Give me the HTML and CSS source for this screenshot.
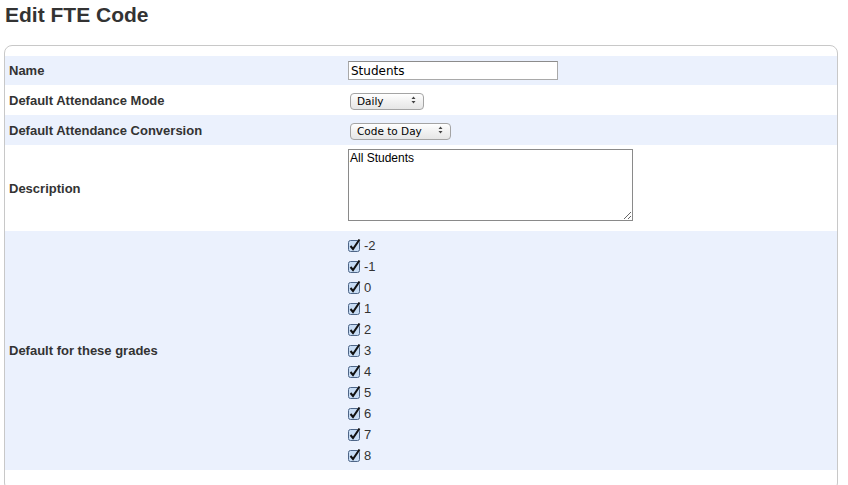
FILE: index.html
```html
<!DOCTYPE html>
<html>
<head>
<meta charset="utf-8">
<title>Edit FTE Code</title>
<link rel="stylesheet" href="styles.css">
</head>
<body>
<h1 class="title">Edit FTE Code</h1>
<div class="box">
  <div class="row alt first">
    <div class="label">Name</div>
    <div class="value"><input class="text" type="text" value="Students"></div>
  </div>
  <div class="row">
    <div class="label">Default Attendance Mode</div>
    <div class="value">
      <span class="select w-mode"><select><option>Daily</option></select>
        <svg class="arrows" width="5" height="8" viewBox="0 0 5 8"><path d="M0.5 3 L2.5 0.5 L4.5 3 Z M0.5 5 L2.5 7.5 L4.5 5 Z" fill="#444"/></svg>
      </span>
    </div>
  </div>
  <div class="row alt">
    <div class="label">Default Attendance Conversion</div>
    <div class="value">
      <span class="select w-conv"><select><option>Code to Day</option></select>
        <svg class="arrows" width="5" height="8" viewBox="0 0 5 8"><path d="M0.5 3 L2.5 0.5 L4.5 3 Z M0.5 5 L2.5 7.5 L4.5 5 Z" fill="#444"/></svg>
      </span>
    </div>
  </div>
  <div class="row desc">
    <div class="label">Description</div>
    <div class="value"><textarea class="area">All Students</textarea></div>
  </div>
  <div class="row alt grades">
    <div class="label">Default for these grades</div>
    <div class="value">
      <ul class="checks">
        <li><svg class="cb" width="14" height="14" viewBox="0 0 14 14"><rect x="0.5" y="1.5" width="11" height="11" rx="2" fill="#c7dcf4" stroke="#4d6587"/><path d="M2.5 7 L5 10 L11.5 0.5" fill="none" stroke="#111" stroke-width="2"/></svg>-2</li>
        <li><svg class="cb" width="14" height="14" viewBox="0 0 14 14"><rect x="0.5" y="1.5" width="11" height="11" rx="2" fill="#c7dcf4" stroke="#4d6587"/><path d="M2.5 7 L5 10 L11.5 0.5" fill="none" stroke="#111" stroke-width="2"/></svg>-1</li>
        <li><svg class="cb" width="14" height="14" viewBox="0 0 14 14"><rect x="0.5" y="1.5" width="11" height="11" rx="2" fill="#c7dcf4" stroke="#4d6587"/><path d="M2.5 7 L5 10 L11.5 0.5" fill="none" stroke="#111" stroke-width="2"/></svg>0</li>
        <li><svg class="cb" width="14" height="14" viewBox="0 0 14 14"><rect x="0.5" y="1.5" width="11" height="11" rx="2" fill="#c7dcf4" stroke="#4d6587"/><path d="M2.5 7 L5 10 L11.5 0.5" fill="none" stroke="#111" stroke-width="2"/></svg>1</li>
        <li><svg class="cb" width="14" height="14" viewBox="0 0 14 14"><rect x="0.5" y="1.5" width="11" height="11" rx="2" fill="#c7dcf4" stroke="#4d6587"/><path d="M2.5 7 L5 10 L11.5 0.5" fill="none" stroke="#111" stroke-width="2"/></svg>2</li>
        <li><svg class="cb" width="14" height="14" viewBox="0 0 14 14"><rect x="0.5" y="1.5" width="11" height="11" rx="2" fill="#c7dcf4" stroke="#4d6587"/><path d="M2.5 7 L5 10 L11.5 0.5" fill="none" stroke="#111" stroke-width="2"/></svg>3</li>
        <li><svg class="cb" width="14" height="14" viewBox="0 0 14 14"><rect x="0.5" y="1.5" width="11" height="11" rx="2" fill="#c7dcf4" stroke="#4d6587"/><path d="M2.5 7 L5 10 L11.5 0.5" fill="none" stroke="#111" stroke-width="2"/></svg>4</li>
        <li><svg class="cb" width="14" height="14" viewBox="0 0 14 14"><rect x="0.5" y="1.5" width="11" height="11" rx="2" fill="#c7dcf4" stroke="#4d6587"/><path d="M2.5 7 L5 10 L11.5 0.5" fill="none" stroke="#111" stroke-width="2"/></svg>5</li>
        <li><svg class="cb" width="14" height="14" viewBox="0 0 14 14"><rect x="0.5" y="1.5" width="11" height="11" rx="2" fill="#c7dcf4" stroke="#4d6587"/><path d="M2.5 7 L5 10 L11.5 0.5" fill="none" stroke="#111" stroke-width="2"/></svg>6</li>
        <li><svg class="cb" width="14" height="14" viewBox="0 0 14 14"><rect x="0.5" y="1.5" width="11" height="11" rx="2" fill="#c7dcf4" stroke="#4d6587"/><path d="M2.5 7 L5 10 L11.5 0.5" fill="none" stroke="#111" stroke-width="2"/></svg>7</li>
        <li><svg class="cb" width="14" height="14" viewBox="0 0 14 14"><rect x="0.5" y="1.5" width="11" height="11" rx="2" fill="#c7dcf4" stroke="#4d6587"/><path d="M2.5 7 L5 10 L11.5 0.5" fill="none" stroke="#111" stroke-width="2"/></svg>8</li>
      </ul>
    </div>
  </div>
  <div class="row spacer"></div>
</div>
</body>
</html>
```

FILE: styles.css
```css
html, body {
  margin: 0;
  padding: 0;
  background: #fff;
}
body {
  font-family: "Liberation Sans", Arial, sans-serif;
  color: #333;
  padding: 0 10px 0 4px;
}
.title {
  font-size: 21px;
  font-weight: bold;
  line-height: 24px;
  margin: 3px 0 0 1px;
  color: #333;
}
.box {
  margin-top: 18px;
  border: 1px solid #c8c8c8;
  border-radius: 8px;
  padding-top: 10px;
}
.row {
  display: grid;
  grid-template-columns: 343px 1fr;
  align-items: center;
  min-height: 30px;
}
.row.first {
  min-height: 29px;
}
.row.alt {
  background: #ebf1fd;
}
.label {
  font-size: 13px;
  font-weight: bold;
  padding-left: 4px;
}
.value {
  display: flex;
  align-items: center;
}
.text {
  box-sizing: border-box;
  width: 210px;
  height: 19px;
  margin: 0;
  padding: 0 2px;
  border: 1px solid #a9a9a9;
  border-top-color: #8c8c8c;
  font-family: "DejaVu Sans", sans-serif;
  font-size: 12px;
  color: #000;
  background: #fff;
}
.select {
  position: relative;
  display: inline-block;
  margin-left: 2px;
}
.select select {
  appearance: none;
  -webkit-appearance: none;
  box-sizing: border-box;
  height: 17px;
  margin: 0;
  padding: 0 0 0 6px;
  border: 1px solid #a4a4a4;
  border-radius: 4px;
  background: linear-gradient(#ffffff, #f1f1f1 50%, #e6e6e6);
  font-family: "DejaVu Sans", sans-serif;
  font-size: 10.5px;
  color: #000;
  line-height: 15px;
}
.w-mode select { width: 74px; }
.w-conv select { width: 101px; }
.arrows {
  position: absolute;
  top: 5px;
  right: 8px;
}
.desc {
  min-height: 86px;
}
.desc .value {
  padding: 4px 0 10px;
}
.area {
  box-sizing: border-box;
  width: 285px;
  height: 72px;
  margin: 0;
  padding: 1px 1px;
  border: 1px solid #8a8a8a;
  font-family: "Liberation Sans", Arial, sans-serif;
  font-size: 12px;
  line-height: 14px;
  color: #000;
  resize: both;
  background: #fff;
}
.checks {
  list-style: none;
  margin: 0;
  padding: 4px 0 4px;
}
.checks li {
  display: flex;
  align-items: center;
  height: 21px;
  font-size: 13px;
  color: #333;
}
.cb {
  margin-right: 2px;
  flex: none;
}
.spacer {
  min-height: 20px;
}
```
